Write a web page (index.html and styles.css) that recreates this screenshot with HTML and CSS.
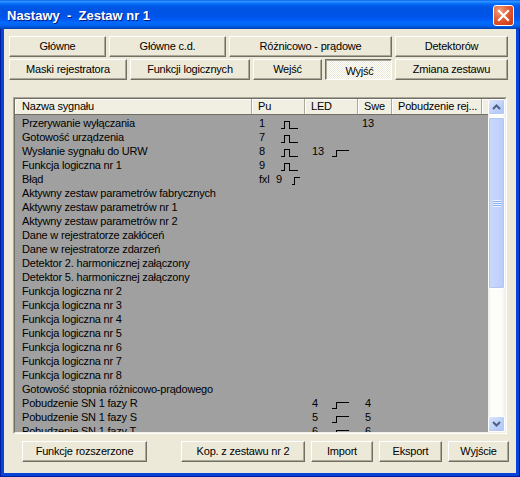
FILE: index.html
```html
<!DOCTYPE html>
<html>
<head>
<meta charset="utf-8">
<link rel="stylesheet" href="styles.css">
</head>
<body>
<div class="window">
  <div class="titlebar">
    <span class="title">Nastawy  -  Zestaw nr 1</span>
    <span class="close"><svg width="19" height="19" viewBox="0 0 19 19"><path d="M5 5 L14 14 M14 5 L5 14" stroke="#fff" stroke-width="2.2" stroke-linecap="square"/></svg></span>
  </div>
  <div class="client">
    <div class="tabrow">
      <div class="btn w-glowne">Główne</div>
      <div class="btn w-glowne2">Główne c.d.</div>
      <div class="btn w-roznic">Różnicowo - prądowe</div>
      <div class="btn w-detekt">Detektorów</div>
    </div>
    <div class="tabrow second">
      <div class="btn w-maski">Maski rejestratora</div>
      <div class="btn w-funk">Funkcji logicznych</div>
      <div class="btn w-wejsc">Wejść</div>
      <div class="btn w-wyjsc pressed">Wyjść</div>
      <div class="btn w-zmiana">Zmiana zestawu</div>
    </div>

    <div class="listbox">
      <div class="listframe">
        <div class="listmain">
          <div class="lhead">
            <div class="h h-name">Nazwa sygnału</div>
            <div class="h">Pu</div>
            <div class="h">LED</div>
            <div class="h">Swe</div>
            <div class="h">Pobudzenie rej...</div>
            <div class="h h-fill"></div>
          </div>
          <div class="lbody">
            <div class="row"><div class="c name">Przerywanie wyłączania</div><div class="c pu"><span class="n">1</span><svg class="pulse" width="18" height="8"><path d="M0 7.5H3.5V0.5H8.5V7.5H17"/></svg></div><div class="c led"></div><div class="c swe"><span class="s">13</span></div><div class="c"></div></div>
            <div class="row"><div class="c name">Gotowość urządzenia</div><div class="c pu"><span class="n">7</span><svg class="pulse" width="18" height="8"><path d="M0 7.5H3.5V0.5H8.5V7.5H17"/></svg></div><div class="c led"></div><div class="c swe"></div><div class="c"></div></div>
            <div class="row"><div class="c name">Wysłanie sygnału do URW</div><div class="c pu"><span class="n">8</span><svg class="pulse" width="18" height="8"><path d="M0 7.5H3.5V0.5H8.5V7.5H17"/></svg></div><div class="c led"><span class="n">13</span><svg class="step" width="18" height="7"><path d="M0 6.5H4.5V0.5H17"/></svg></div><div class="c swe"></div><div class="c"></div></div>
            <div class="row"><div class="c name">Funkcja logiczna nr 1</div><div class="c pu"><span class="n">9</span><svg class="pulse" width="18" height="8"><path d="M0 7.5H3.5V0.5H8.5V7.5H17"/></svg></div><div class="c led"></div><div class="c swe"></div><div class="c"></div></div>
            <div class="row"><div class="c name">Błąd</div><div class="c pu"><span class="fx">fxl</span><span class="n9">9</span><svg class="mini" width="10" height="8"><path d="M0 7.5H2.5V0.5H8"/></svg></div><div class="c led"></div><div class="c swe"></div><div class="c"></div></div>
            <div class="row"><div class="c name">Aktywny zestaw parametrów fabrycznych</div><div class="c"></div><div class="c"></div><div class="c"></div><div class="c"></div></div>
            <div class="row"><div class="c name">Aktywny zestaw parametrów nr 1</div><div class="c"></div><div class="c"></div><div class="c"></div><div class="c"></div></div>
            <div class="row"><div class="c name">Aktywny zestaw parametrów nr 2</div><div class="c"></div><div class="c"></div><div class="c"></div><div class="c"></div></div>
            <div class="row"><div class="c name">Dane w rejestratorze zakłóceń</div><div class="c"></div><div class="c"></div><div class="c"></div><div class="c"></div></div>
            <div class="row"><div class="c name">Dane w rejestratorze zdarzeń</div><div class="c"></div><div class="c"></div><div class="c"></div><div class="c"></div></div>
            <div class="row"><div class="c name">Detektor 2. harmonicznej załączony</div><div class="c"></div><div class="c"></div><div class="c"></div><div class="c"></div></div>
            <div class="row"><div class="c name">Detektor 5. harmonicznej załączony</div><div class="c"></div><div class="c"></div><div class="c"></div><div class="c"></div></div>
            <div class="row"><div class="c name">Funkcja logiczna nr 2</div><div class="c"></div><div class="c"></div><div class="c"></div><div class="c"></div></div>
            <div class="row"><div class="c name">Funkcja logiczna nr 3</div><div class="c"></div><div class="c"></div><div class="c"></div><div class="c"></div></div>
            <div class="row"><div class="c name">Funkcja logiczna nr 4</div><div class="c"></div><div class="c"></div><div class="c"></div><div class="c"></div></div>
            <div class="row"><div class="c name">Funkcja logiczna nr 5</div><div class="c"></div><div class="c"></div><div class="c"></div><div class="c"></div></div>
            <div class="row"><div class="c name">Funkcja logiczna nr 6</div><div class="c"></div><div class="c"></div><div class="c"></div><div class="c"></div></div>
            <div class="row"><div class="c name">Funkcja logiczna nr 7</div><div class="c"></div><div class="c"></div><div class="c"></div><div class="c"></div></div>
            <div class="row"><div class="c name">Funkcja logiczna nr 8</div><div class="c"></div><div class="c"></div><div class="c"></div><div class="c"></div></div>
            <div class="row"><div class="c name">Gotowość stopnia różnicowo-prądowego</div><div class="c"></div><div class="c"></div><div class="c"></div><div class="c"></div></div>
            <div class="row"><div class="c name">Pobudzenie SN 1 fazy R</div><div class="c"></div><div class="c led"><span class="n">4</span><svg class="step" width="18" height="7"><path d="M0 6.5H4.5V0.5H17"/></svg></div><div class="c swe"><span class="s">4</span></div><div class="c"></div></div>
            <div class="row"><div class="c name">Pobudzenie SN 1 fazy S</div><div class="c"></div><div class="c led"><span class="n">5</span><svg class="step" width="18" height="7"><path d="M0 6.5H4.5V0.5H17"/></svg></div><div class="c swe"><span class="s">5</span></div><div class="c"></div></div>
            <div class="row"><div class="c name">Pobudzenie SN 1 fazy T</div><div class="c"></div><div class="c led"><span class="n">6</span><svg class="step" width="18" height="7"><path d="M0 6.5H4.5V0.5H17"/></svg></div><div class="c swe"><span class="s">6</span></div><div class="c"></div></div>
          </div>
        </div>
        <div class="vscroll">
          <div class="sb-btn"><svg width="9" height="6" viewBox="0 0 9 6"><path d="M1 5 L4.5 1.5 L8 5" fill="none" stroke="#4D6185" stroke-width="2"/></svg></div>
          <div class="sb-track">
            <div class="thumb"><div class="grip"></div></div>
          </div>
          <div class="sb-btn"><svg width="9" height="6" viewBox="0 0 9 6"><path d="M1 1 L4.5 4.5 L8 1" fill="none" stroke="#4D6185" stroke-width="2"/></svg></div>
        </div>
      </div>
    </div>

    <div class="bottombar">
      <div class="btn w-funrozsz">Funkcje rozszerzone</div>
      <div class="btn w-kop">Kop. z zestawu nr 2</div>
      <div class="btn w-import">Import</div>
      <div class="btn w-eksport">Eksport</div>
      <div class="btn w-wyjscie">Wyjście</div>
    </div>
  </div>
</div>
</body>
</html>
```

FILE: styles.css
```css
html, body {
  margin: 0;
  padding: 0;
  background: #fff;
}
body {
  font-family: "Liberation Sans", Arial, sans-serif;
  font-size: 11px;
  letter-spacing: -0.2px;
  color: #000;
}
.window {
  width: 520px;
  height: 477px;
  box-sizing: border-box;
  display: flex;
  flex-direction: column;
  background: #0842D6;
  box-shadow: inset 1px 0 #001EA0, inset -1px 0 #001EA0, inset 0 -1px #001EA0;
}
.titlebar {
  height: 29px;
  flex: none;
  display: flex;
  align-items: flex-start;
  padding: 0 6px 0 7px;
  background: linear-gradient(to bottom,
    #0058EE 0%, #3593FF 4%, #288EFF 7%, #127DFF 10%, #036FFC 13%,
    #0262EE 18%, #0057E5 24%, #0054E3 40%, #0055EB 58%, #005BF5 68%,
    #026AFE 78%, #0062EF 88%, #0052D6 94%, #0040AB 100%);
}
.title {
  flex: 1;
  margin-top: 8px;
  color: #fff;
  font-weight: bold;
  font-size: 13px;
  line-height: 16px;
  letter-spacing: 0;
  white-space: pre;
  text-shadow: 1px 1px #0A1883;
}
.close {
  margin-top: 5px;
  width: 21px;
  height: 21px;
  box-sizing: border-box;
  border: 1px solid #fff;
  border-radius: 3px;
  display: flex;
  align-items: center;
  justify-content: center;
  background: radial-gradient(circle at 30% 25%, #F0A27F 0%, #E46A44 35%, #D9461F 70%, #C23A1B 100%);
}
.close svg { display: block; }

.client {
  flex: 1;
  margin: 0 4px 4px 4px;
  background: #ECE9D8;
  display: flex;
  flex-direction: column;
  padding: 7px 0 11px 0;
}
.tabrow {
  display: flex;
  gap: 3px;
  margin: 0 8px 0 5px;
}
.tabrow.second { margin-top: 2px; }

.btn {
  box-sizing: border-box;
  height: 21px;
  flex: none;
  display: flex;
  align-items: center;
  justify-content: center;
  white-space: nowrap;
  background: #ECE9D8;
  border: 1px solid;
  border-color: #FFFFFF #716F64 #716F64 #FFFFFF;
  box-shadow: inset -1px -1px #ACA899;
  padding-bottom: 1px;
}
.btn.pressed {
  border-color: #716F64 #FFFFFF #FFFFFF #716F64;
  box-shadow: inset 1px 1px #ACA899;
  background: repeating-conic-gradient(#FFFFFF 0 25%, #ECE9D8 0 50%) 0 0 / 2px 2px;
  padding: 2px 0 0 2px;
}
.w-glowne { width: 97px; }
.w-glowne2 { width: 117px; }
.w-roznic { width: 163px; }
.w-detekt { width: 113px; }
.w-maski { width: 118px; }
.w-funk { width: 120px; }
.w-wejsc { width: 69px; }
.w-wyjsc { width: 67px; }
.w-zmiana { width: 113px; }

.listbox {
  margin: 17px 9px 0 9px;
  height: 337px;
  box-sizing: border-box;
  border: 1px solid;
  border-color: #ACA899 #FFFFFF #FFFFFF #ACA899;
  flex: none;
}
.listframe {
  height: 100%;
  box-sizing: border-box;
  border: 1px solid;
  border-color: #716F64 #F1EFE2 #F1EFE2 #716F64;
  display: flex;
}
.listmain {
  width: 473px;
  flex: none;
  display: flex;
  flex-direction: column;
  background: #A0A0A0;
  overflow: hidden;
}
.lhead {
  display: grid;
  grid-template-columns: 237px 53px 53px 34px 90px 6px;
  height: 16px;
  flex: none;
  background: #F1EFE2;
  box-sizing: border-box;
  border-bottom: 1px solid #716F64;
}
.h {
  box-sizing: border-box;
  line-height: 15px;
  padding-left: 6px;
  border-right: 1px solid #ACA899;
  box-shadow: inset 1px 1px #FFFFFF;
  white-space: nowrap;
  overflow: hidden;
}
.h-name { padding-left: 7px; }
.h-fill { border-right: none; }

.lbody {
  padding-top: 1px;
  flex: 1;
  overflow: hidden;
}
.row {
  display: grid;
  grid-template-columns: 237px 53px 53px 34px 90px;
  height: 14px;
  line-height: 14px;
  white-space: nowrap;
}
.c { overflow: hidden; }
.name { padding-left: 7px; }
.pu, .led { padding-left: 7px; }
.n { display: inline-block; }
.pu .n { width: 22px; }
.led .n { width: 20px; }
.fx { display: inline-block; width: 17px; }
.n9 { display: inline-block; width: 16px; }
.swe { padding-left: 1px; }
.s { display: inline-block; width: 18px; text-align: center; }
.pulse, .step, .mini {
  vertical-align: -2px;
  fill: none;
  stroke: #000;
  stroke-width: 1;
  shape-rendering: crispEdges;
}

.vscroll {
  width: 17px;
  flex: none;
  display: flex;
  flex-direction: column;
  background: linear-gradient(to right, #EEEDE5, #FDFDFA 3px, #FDFDFA 13px, #F3F1EC);
}
.sb-btn {
  height: 16px;
  flex: none;
  box-sizing: border-box;
  border: 1px solid #FFFFFF;
  border-radius: 2px;
  background: linear-gradient(135deg, #DCE6FE, #BBCFF9 60%, #AFC6F6);
  box-shadow: inset -1px -1px #B4C8F2;
  display: flex;
  align-items: center;
  justify-content: center;
}
.sb-track {
  flex: 1;
  padding-top: 2px;
}
.thumb {
  height: 172px;
  box-sizing: border-box;
  border: 1px solid #FFFFFF;
  border-radius: 2px;
  background: linear-gradient(to right, #CAD9FD, #C3D3FC 50%, #B9CBF7);
  box-shadow: inset 0 0 0 1px #B2C6F4;
  display: flex;
  align-items: center;
  justify-content: center;
}
.grip {
  width: 8px;
  height: 7px;
  background: repeating-linear-gradient(to bottom, #EEF4FE 0 1px, #8CB0F8 1px 2px);
}

.bottombar {
  display: flex;
  gap: 6px;
  margin: 7px 7px 0 18px;
}
.w-funrozsz { width: 125px; margin-right: auto; }
.w-kop { width: 124px; }
.w-import { width: 62px; }
.w-eksport { width: 63px; }
.w-wyjscie { width: 61px; }
```
